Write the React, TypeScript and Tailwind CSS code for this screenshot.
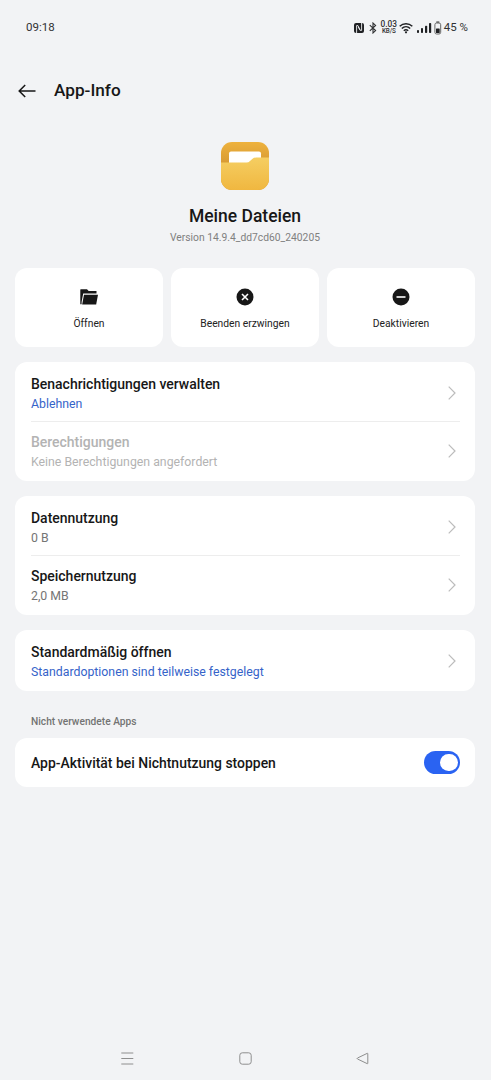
import { useState, type ReactNode } from "react";
import clsx from "clsx";

type Item = {
  title: string;
  summary: string;
  tone?: "link" | "muted";
  disabled?: boolean;
};

const NOTIFICATIONS: Item[] = [
  { title: "Benachrichtigungen verwalten", summary: "Ablehnen", tone: "link" },
  {
    title: "Berechtigungen",
    summary: "Keine Berechtigungen angefordert",
    disabled: true,
  },
];

const USAGE: Item[] = [
  { title: "Datennutzung", summary: "0 B" },
  { title: "Speichernutzung", summary: "2,0 MB" },
];

const DEFAULTS: Item[] = [
  {
    title: "Standardmäßig öffnen",
    summary: "Standardoptionen sind teilweise festgelegt",
    tone: "link",
  },
];

const StatusBar = () => (
  <div className="flex h-[55px] items-center justify-between pr-[23px] pl-[26px] text-[11.5px] text-[#303133]">
    <span>09:18</span>
    <div className="flex items-center">
      <svg width="10" height="10" viewBox="0 0 10 10" className="mr-[5px]">
        <rect width="10" height="10" rx="2" fill="#202124" />
        <path
          d="M2.6 10V2.6H4L6 6.8M7.6 0v7.4H6.2L4.2 4"
          fill="none"
          stroke="#f2f3f5"
          strokeWidth=".9"
        />
      </svg>
      <svg
        width="8"
        height="12"
        viewBox="0 0 8 12"
        fill="none"
        stroke="#303133"
        strokeWidth="1.1"
        className="mr-[3px]"
      >
        <path d="M.8 3.2 6.6 8.6 4 11V1l2.6 2.4L.8 8.8" />
      </svg>
      <div className="mr-[2px] flex w-[17px] flex-col items-center font-medium">
        <span className="text-[8.3px] leading-[7px]">0.03</span>
        <span className="text-[6.3px] leading-[6px] tracking-[-0.2px]">KB/S</span>
      </div>
      <svg
        width="14"
        height="12"
        viewBox="0 0 14 12"
        fill="none"
        stroke="#202124"
        strokeWidth="1.5"
        className="mr-[4px]"
      >
        <path d="M.7 4.2c3.6-3.4 9-3.4 12.6 0M2.8 6.5c2.4-2.2 6-2.2 8.4 0M4.8 8.7c1.3-1.1 3.1-1.1 4.4 0" />
        <circle cx="7" cy="10.3" r="1.1" fill="#202124" stroke="none" />
      </svg>
      <svg
        width="15"
        height="10"
        viewBox="0 0 15 10"
        fill="#202124"
        className="mr-[2px]"
      >
        <rect x="0" y="7" width="2" height="3" rx=".8" />
        <rect x="4" y="5" width="2" height="5" rx=".8" />
        <rect x="8" y="2.8" width="2.2" height="7.2" rx=".8" />
        <rect x="12" y="0" width="2.2" height="10" rx=".8" />
      </svg>
      <svg width="8" height="14" viewBox="0 0 8 14" className="mr-[1.5px]">
        <rect x="2.3" y=".4" width="3" height="1.4" fill="#555" />
        <rect
          x=".9"
          y="2"
          width="5.8"
          height="11"
          rx="1.7"
          fill="none"
          stroke="#666"
          strokeWidth="1"
        />
        <rect x="2" y="7.4" width="3.7" height="4.5" rx=".5" fill="#202124" />
      </svg>
      <span>45 %</span>
    </div>
  </div>
);

const FolderLogo = () => (
  <svg width="48" height="48" viewBox="0 0 48 48">
    <defs>
      <linearGradient id="back" x1="0" y1="0" x2="0" y2="1">
        <stop offset="0" stopColor="#eeb23d" />
        <stop offset=".45" stopColor="#d79a34" />
      </linearGradient>
      <linearGradient id="front" x1="0" y1="0" x2="0" y2="1">
        <stop offset="0" stopColor="#f5ce62" />
        <stop offset="1" stopColor="#f0b740" />
      </linearGradient>
      <clipPath id="tile">
        <rect width="48" height="48" rx="11" />
      </clipPath>
    </defs>
    <g clipPath="url(#tile)">
      <rect width="48" height="48" fill="url(#back)" />
      <path d="M8 22V11.5Q8 9.5 10 9.5H38Q40 9.5 40 11.5V22Z" fill="#fff" />
      <path
        d="M0 20.5H25.5Q27.5 20.5 29 19L31.2 17Q32.8 15.6 35 15.6H48V48H0Z"
        fill="url(#front)"
      />
    </g>
  </svg>
);

const Action = ({ label, children }: { label: string; children: ReactNode }) => (
  <button
    type="button"
    className="flex h-[79px] flex-1 flex-col items-center rounded-[12px] bg-white pt-[20px] text-[10.3px] leading-[14px] text-[#222]"
  >
    <svg width="18" height="18" viewBox="0 0 18 18" className="mb-[11px]">
      {children}
    </svg>
    {label}
  </button>
);

const Row = ({ title, summary, tone = "muted", disabled }: Item) => (
  <div className="flex h-[57px] items-center justify-between">
    <div className="pt-[3px]">
      <div
        className={clsx(
          "text-[14px] leading-5 font-medium tracking-[-0.02px]",
          disabled ? "text-[#b3b3b3]" : "text-[#171717]",
        )}
      >
        {title}
      </div>
      <div
        className={clsx(
          "text-[12.3px] leading-[21px]",
          disabled && "text-[#b3b3b3]",
          !disabled && tone === "link" && "text-[#3563c9]",
          !disabled && tone === "muted" && "text-[#757575]",
        )}
      >
        {summary}
      </div>
    </div>
    <svg
      width="8"
      height="14"
      viewBox="0 0 8 14"
      fill="none"
      stroke="#bcbcbc"
      strokeWidth="1.2"
      className="mr-[4px]"
    >
      <path d="M.7.7 7 7 .7 13.3" />
    </svg>
  </div>
);

const Group = ({ items }: { items: Item[] }) => (
  <section className="mb-[15px] rounded-[12px] bg-white pr-[15px] pl-4 pt-[2px] pb-[2px]">
    {items.map((item, i) => (
      <div key={item.title} className={clsx(i > 0 && "border-t border-[#ededed]")}>
        <Row {...item} />
      </div>
    ))}
  </section>
);

const App = () => {
  const [stopUnused, setStopUnused] = useState(true);

  return (
    <div className="flex h-screen min-h-[1080px] flex-col bg-[#f2f3f5] font-['Roboto',sans-serif]">
      <StatusBar />

      <header className="flex h-[71px] items-center pl-[18px]">
        <svg
          width="18"
          height="14"
          viewBox="0 0 18 14"
          fill="none"
          stroke="#171717"
          strokeWidth="1.5"
          className="mr-[18px]"
        >
          <path d="M17.5 7H1.5M7.2 1 1.2 7l6 6" />
        </svg>
        <h1 className="pt-px text-[17.2px] font-medium text-[#171717]">
          App-Info
        </h1>
      </header>

      <main className="pr-4 pl-[15px]">
        <div className="flex flex-col items-center pt-[16px]">
          <FolderLogo />
          <h2 className="mt-[14px] text-[17.5px] leading-6 font-medium text-[#171717]">
            Meine Dateien
          </h2>
          <p className="mt-[2px] text-[10.3px] leading-4 text-[#808080]">
            Version 14.9.4_dd7cd60_240205
          </p>
        </div>

        <div className="mt-[21.5px] mb-[15.5px] flex gap-2">
          <Action label="Öffnen">
            <path
              d="M.3 1.7Q.3 1.2.8 1.2H7l1.7 1.9h7.8V5.6H3.2L1.6 14V16.3H.3Z"
              fill="#171717"
            />
            <path d="M4 6.7H18L16.2 16.4H2.2Z" fill="#171717" />
          </Action>
          <Action label="Beenden erzwingen">
            <circle cx="9" cy="9" r="8.5" fill="#171717" />
            <path
              d="m6 6 6 6m0-6-6 6"
              stroke="#fff"
              strokeWidth="1.6"
            />
          </Action>
          <Action label="Deaktivieren">
            <circle cx="9" cy="9" r="8.5" fill="#171717" />
            <path d="M4.5 9h9" stroke="#fff" strokeWidth="1.6" />
          </Action>
        </div>

        <Group items={NOTIFICATIONS} />
        <Group items={USAGE} />
        <Group items={DEFAULTS} />

        <p className="mt-[23px] mb-2 pl-4 text-[10.2px] leading-4 font-medium text-[#737373]">
          Nicht verwendete Apps
        </p>
        <section className="flex h-[49px] items-center justify-between rounded-[12px] bg-white pr-[15px] pl-4">
          <span className="pt-px text-[13.95px] font-medium text-[#171717]">
            App-Aktivität bei Nichtnutzung stoppen
          </span>
          <button
            type="button"
            role="switch"
            aria-checked={stopUnused}
            aria-label="App-Aktivität bei Nichtnutzung stoppen"
            onClick={() => setStopUnused(!stopUnused)}
            className={clsx(
              "flex h-[23px] w-[36.5px] items-center rounded-full px-[2.5px]",
              stopUnused ? "justify-end bg-[#2a63f2]" : "bg-[#cfcfcf]",
            )}
          >
            <span className="size-[17.5px] rounded-full bg-white" />
          </button>
        </section>
      </main>

      <nav className="mt-auto flex h-[43px] items-center justify-between pr-[122px] pl-[121px]">
        <svg width="13" height="13" viewBox="0 0 13 13" stroke="#8e8e8e">
          <path d="M.3 1h12M.3 6.5h12M.3 12h12" />
        </svg>
        <svg
          width="13"
          height="13"
          viewBox="0 0 13 13"
          fill="none"
          stroke="#8e8e8e"
        >
          <rect x=".8" y=".8" width="11.4" height="11.4" rx="2.5" />
        </svg>
        <svg
          width="13"
          height="13"
          viewBox="0 0 13 13"
          fill="none"
          stroke="#8e8e8e"
          strokeLinejoin="round"
        >
          <path d="M11.8 1.8v9.4q0 .8-.7.4L1.5 7q-.8-.5 0-1l9.6-4.6q.7-.4.7.4Z" />
        </svg>
      </nav>
    </div>
  );
};

export default App;
